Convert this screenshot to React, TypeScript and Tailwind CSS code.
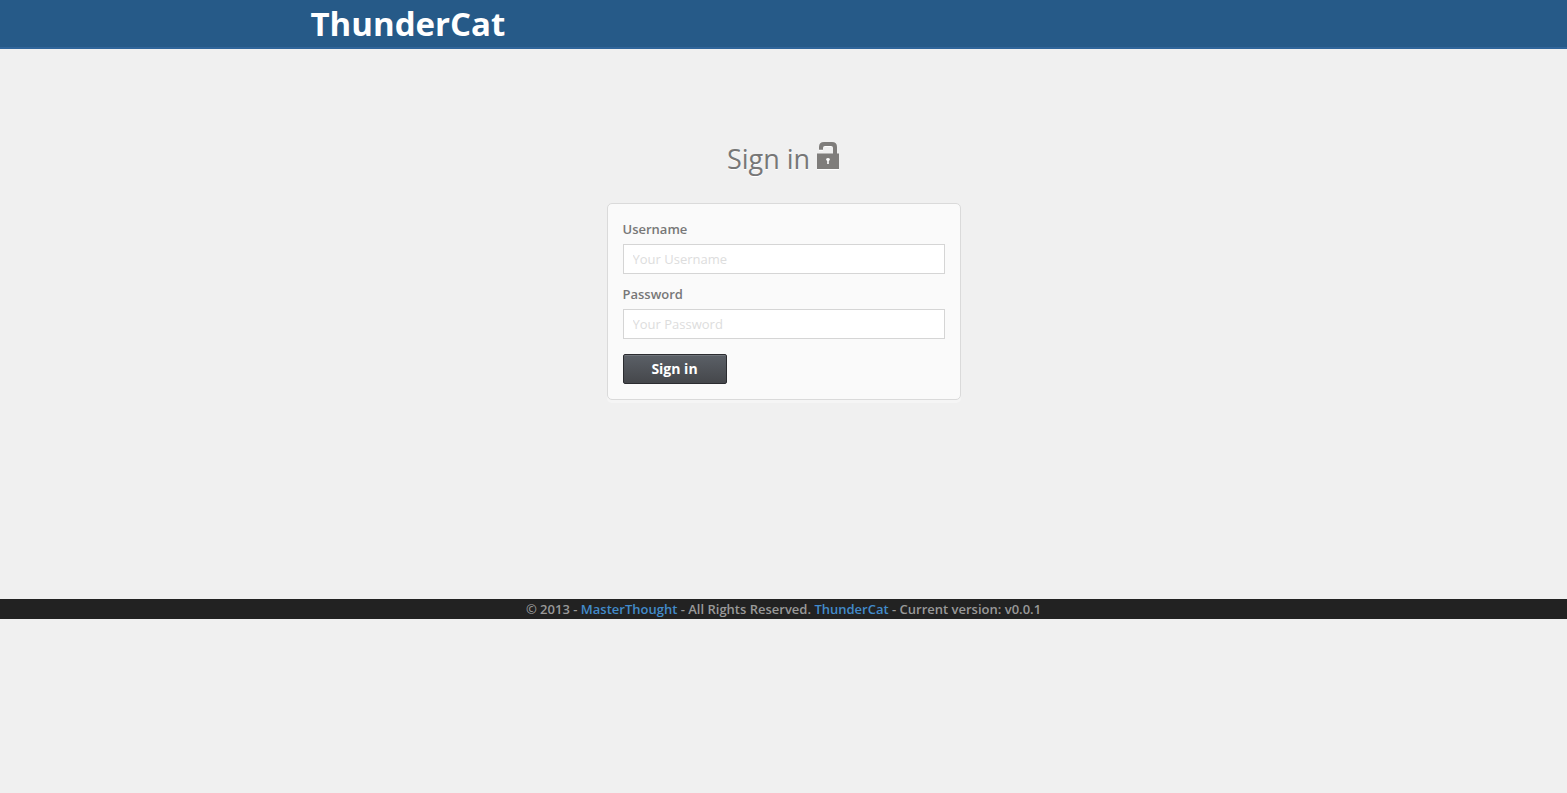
export default function App() {
  return (
    <div className="min-h-screen bg-[#f0f0f0] font-['Open_Sans',sans-serif] text-[13px] leading-5 text-[#777]">
      <header className="h-[49px] border-b-2 border-[#30659a] bg-[#265a88]">
        <div className="mx-auto flex w-full max-w-[946px] pt-1">
          <a href="#" className="text-[33px] leading-10 font-bold text-white">ThunderCat</a>
        </div>
      </header>
      <main className="flex h-[550px] flex-col items-center pt-[90px]">
        <h1 className="flex gap-1.5 text-[27px] leading-10 [text-shadow:0_1px_0_#fff]">
          Sign in
          <svg viewBox="0 0 24 28" className="mt-[3px] h-7 w-6" aria-hidden="true">
            <path fill="#fff" transform="translate(0 1)" d="M1 11.5H17V6Q17 4 15 4H9Q7 4 7 6V7.7H3V5Q3 0 8 0H15Q20 0 20 5V11.5H23V27H1Z" />
            <path fill="#7f7d7b" d="M1 11.5H17V6Q17 4 15 4H9Q7 4 7 6V7.7H3V5Q3 0 8 0H16Q21 0 21 5V11.5H23V27H1Z" />
            <path fill="#fff" d="M10.2 16.8Q12 15.4 13.8 16.8V18L12.8 19V22H11.2V19L10.2 18Z" />
          </svg>
        </h1>
        <form className="mt-6 w-full max-w-[354px] rounded-[5px] border border-[#dadada] bg-[#fafafa] p-[15px] shadow-[0_3px_0_#f5f5f5]">
          <label htmlFor="username" className="block font-semibold">Username</label>
          <input id="username" type="text" placeholder="Your Username" className="mt-[5px] block h-[30px] w-full border border-[#d5d5d5] bg-white px-[9px] placeholder:text-[#ddd]" />
          <label htmlFor="password" className="mt-[10px] block font-semibold">Password</label>
          <input id="password" type="password" placeholder="Your Password" className="mt-[5px] block h-[30px] w-full border border-[#d5d5d5] bg-white px-[9px] placeholder:text-[#ddd]" />
          <button type="submit" className="mt-[15px] block h-[30px] w-[104px] rounded-xs border border-[#2b2c30] bg-linear-to-b from-[#5b6067] to-[#45474b] text-sm font-bold text-white shadow-[inset_0_1px_0_#70757b]">Sign in</button>
        </form>
      </main>
      <footer className="bg-[#222] text-center font-semibold text-[#999]">
        © 2013 - <a href="#" className="text-[#428bca]">MasterThought</a> - All Rights Reserved. <a href="#" className="text-[#428bca]">ThunderCat</a> - Current version: v0.0.1
      </footer>
    </div>
  );
}
